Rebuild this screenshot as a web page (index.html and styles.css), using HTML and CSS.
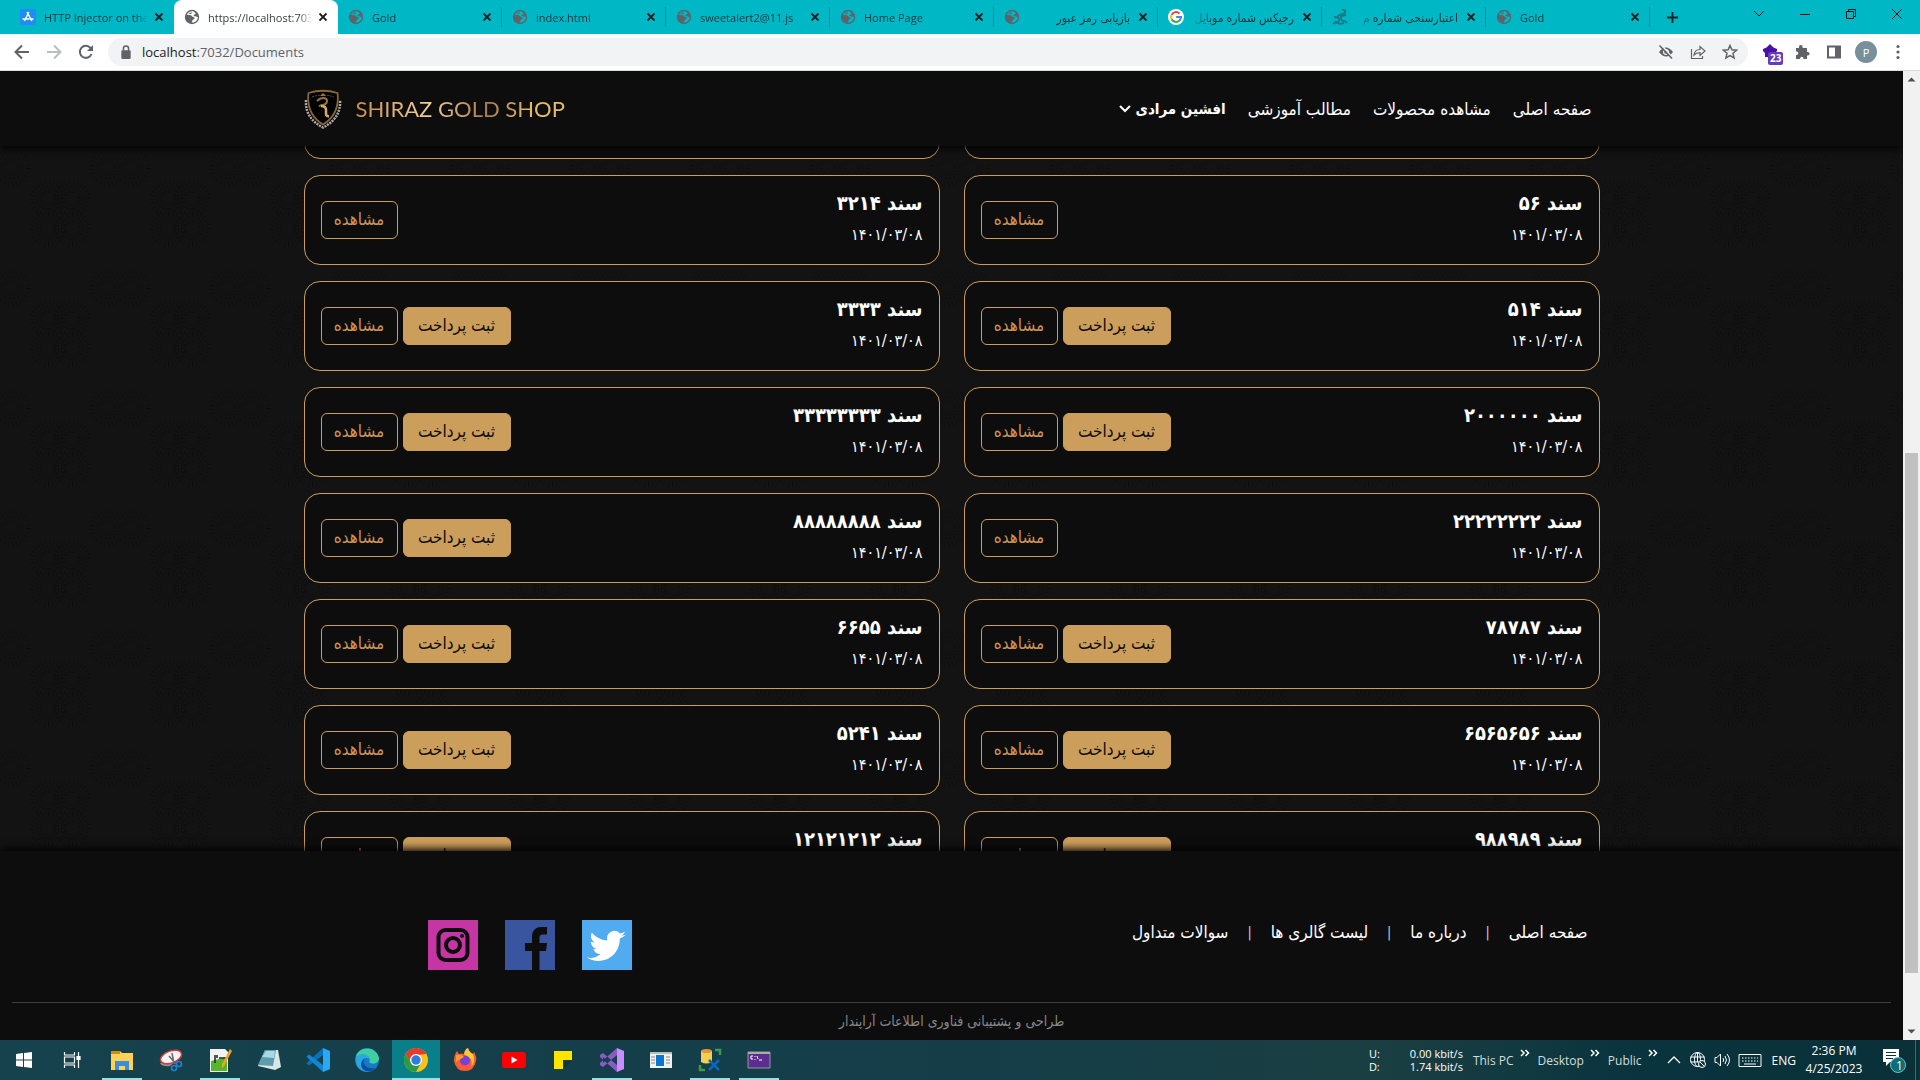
FILE: index.html
```html
<!DOCTYPE html>
<html lang="en">
<head>
<meta charset="utf-8">
<title>Documents</title>
<link rel="stylesheet" href="styles.css">
</head>
<body>
<svg class="defs" aria-hidden="true">
  <symbol id="globe" viewBox="0 0 16 16"><circle cx="8" cy="8" r="7.2" fill="#5f6368"/><path d="M9 2.200C6 2 3.500 3.500 2.700 6c1.500-.8 2.500.2 3.800.2 1.500 0 1.300 1.600 3 1.800 1.600.2 1.200 2-.3 2.400-1 .3-.7 2.200-1.700 3.200 3.500.2 6.300-2.400 6.400-5.700-1.200.3-2-.6-3.400-.6-1 0-1.500-1.800.4-1.900C12.500 5.300 11 3 9 2.200z" fill="var(--hole)"/><path d="M4.500 4.300c1.500-.8 2.500-.9 3.500-.6l-1.200 1.600z" fill="#5f6368"/></symbol>
  <symbol id="x" viewBox="0 0 10 10"><path d="M1.500 1.500l7 7M8.500 1.500l-7 7" stroke="#202124" stroke-width="1.800" fill="none"/></symbol>
  <symbol id="more" viewBox="0 0 10 8"><path d="M1 1l3 3-3 3M5.500 1l3 3-3 3" stroke="#fff" stroke-width="1.500" fill="none"/></symbol>
</svg>

<div class="tabs">
  <div class="tab"><svg class="fav" viewBox="0 0 16 16"><rect width="16" height="16" rx="1" fill="#1e8df5"/><path d="M8.800 3L4.500 12M7 3l4.800 9M2.500 10h7M11 10h2.500" stroke="#fff" stroke-width="1.500" fill="none"/></svg><span class="name">HTTP Injector on the</span><button class="close" aria-label="Close"><svg><use href="#x"/></svg></button></div>
  <div class="tab active"><svg class="fav"><use href="#globe"/></svg><span class="name">https://localhost:7032</span><button class="close" aria-label="Close"><svg><use href="#x"/></svg></button></div>
  <div class="tab"><svg class="fav"><use href="#globe"/></svg><span class="name">Gold</span><button class="close" aria-label="Close"><svg><use href="#x"/></svg></button></div>
  <div class="tab"><svg class="fav"><use href="#globe"/></svg><span class="name">index.html</span><button class="close" aria-label="Close"><svg><use href="#x"/></svg></button></div>
  <div class="tab"><svg class="fav"><use href="#globe"/></svg><span class="name">sweetalert2@11.js</span><button class="close" aria-label="Close"><svg><use href="#x"/></svg></button></div>
  <div class="tab"><svg class="fav"><use href="#globe"/></svg><span class="name">Home Page</span><button class="close" aria-label="Close"><svg><use href="#x"/></svg></button></div>
  <div class="tab"><svg class="fav"><use href="#globe"/></svg><span class="name" dir="rtl">بازیابی رمز عبور</span><button class="close" aria-label="Close"><svg><use href="#x"/></svg></button></div>
  <div class="tab"><svg class="fav" viewBox="0 0 16 16"><circle cx="8" cy="8" r="8" fill="#fff"/><g fill="none" stroke-width="2"><path d="M11.500 4.500A5 5 0 0 0 3.600 5.700" stroke="#ea4335"/><path d="M3.600 5.700a5 5 0 0 0 0 4.600" stroke="#fbbc05"/><path d="M3.600 10.300a5 5 0 0 0 7.600 1.500" stroke="#34a853"/><path d="M11.200 11.800A5 5 0 0 0 13 8H8.200" stroke="#4285f4"/></g></svg><span class="name" dir="rtl">رجیکس شماره موبایل</span><button class="close" aria-label="Close"><svg><use href="#x"/></svg></button></div>
  <div class="tab"><svg class="fav" viewBox="0 0 16 16"><path d="M10 1c4-1 4 3 1 4-2 1-5 0-5 3M14 6c-4 1-6 1-5 4 1 3 4 1 6 4M2 8c2 0 5 0 5 3s-4 2-6 4M3 12c2 3 6 3 9 2" stroke="#177c86" stroke-width="2" fill="none"/></svg><span class="name" dir="rtl">اعتبارسنجی شماره م</span><button class="close" aria-label="Close"><svg><use href="#x"/></svg></button></div>
  <div class="tab"><svg class="fav"><use href="#globe"/></svg><span class="name">Gold</span><button class="close" aria-label="Close"><svg><use href="#x"/></svg></button></div>
  <button class="newtab" aria-label="New tab"><svg viewBox="0 0 14 14"><path d="M7 1v12M1 7h12" stroke="#202124" stroke-width="2"/></svg></button>
  <div class="window-buttons">
    <button aria-label="Search tabs"><svg viewBox="0 0 12 12"><path d="M1 3l5 5 5-5" stroke="#111" fill="none"/></svg></button>
    <button aria-label="Minimize"><svg viewBox="0 0 12 12"><path d="M1 6.500h10" stroke="#111" fill="none"/></svg></button>
    <button aria-label="Restore"><svg viewBox="0 0 12 12"><path d="M1.500 3.500h7v7h-7zM3.500 3.500v-2h7v7h-2" stroke="#111" fill="none"/></svg></button>
    <button aria-label="Close window"><svg viewBox="0 0 12 12"><path d="M1 1l10 10M11 1L1 11" stroke="#111" fill="none"/></svg></button>
  </div>
</div>

<div class="toolbar">
  <button aria-label="Back"><svg viewBox="0 0 16 16"><path d="M15 8H2M8 1.500L1.500 8 8 14.500" stroke="#5f6368" stroke-width="2" fill="none"/></svg></button>
  <button aria-label="Forward"><svg viewBox="0 0 16 16"><path d="M1 8h13M8 1.500L14.500 8 8 14.500" stroke="#babcbe" stroke-width="2" fill="none"/></svg></button>
  <button aria-label="Reload"><svg viewBox="0 0 16 16"><path d="M13.500 10A6 6 0 1 1 12.500 4L14 5.500" stroke="#5f6368" stroke-width="2" fill="none"/><path d="M15 1v6H9z" fill="#5f6368"/></svg></button>
  <div class="omnibox">
    <svg class="lock" viewBox="0 0 10 12"><rect x="1" y="4.500" width="8" height="7.500" rx="1" fill="#5f6368"/><path d="M2.800 5V3a2.200 2.200 0 0 1 4.400 0v2" stroke="#5f6368" stroke-width="1.300" fill="none"/></svg>
    <a class="url" href="#"><b>localhost</b>:7032/Documents</a>
    <button aria-label="Cookies blocked"><svg viewBox="0 0 16 16"><path d="M1 8q7-9 14 0-7 9-14 0z" fill="#5f6368"/><circle cx="8" cy="8" r="3" fill="#f1f3f4"/><circle cx="8" cy="8" r="1.800" fill="#5f6368"/><path d="M3 .8L15 14" stroke="#f1f3f4" stroke-width="1.500"/><path d="M1.500 1.500l12.500 13" stroke="#5f6368" stroke-width="1.600"/></svg></button>
    <button aria-label="Share"><svg viewBox="0 0 16 16"><path d="M1.500 5v9.500h11V12M4 11c.5-4 2.500-5.500 6-5.500V2.500L15 7l-5 4.500V8.600C7 8.600 5.500 9.300 4 11z" stroke="#5f6368" stroke-width="1.200" fill="none"/></svg></button>
    <button aria-label="Bookmark"><svg viewBox="0 0 16 16"><path d="M8 1.500l1.900 4.300 4.700.4-3.600 3.100 1.100 4.600L8 11.500l-4.100 2.400L5 9.300 1.400 6.200l4.700-.4z" stroke="#5f6368" stroke-width="1.500" fill="none"/></svg></button>
  </div>
  <button class="ext" aria-label="Extension"><svg viewBox="0 0 16 16"><path d="M8 0l3.500 3.500L15 5v2l-2 2v4H3V9L1 7V5l3.500-1.500z" fill="#4a0fa8"/></svg><span class="badge">23</span></button>
  <button aria-label="Extensions"><svg viewBox="0 0 16 16"><path d="M5 4V2.800a1.800 1.800 0 0 1 3.600 0V4H13v4h.8a1.800 1.800 0 0 1 0 3.600H13V15H9.500v-.6a1.700 1.700 0 0 0-3.400 0v.6H2v-4h.6a1.700 1.700 0 0 0 0-3.400H2V4z" fill="#5f6368"/></svg></button>
  <button aria-label="Side panel"><svg viewBox="0 0 16 16"><rect x="2" y="2.500" width="12" height="11" fill="none" stroke="#5f6368" stroke-width="2"/><path d="M9 2h5v12H9z" fill="#5f6368"/></svg></button>
  <button class="avatar">P</button>
  <button aria-label="Menu"><svg viewBox="0 0 16 16" fill="#5f6368"><circle cx="8" cy="2.500" r="1.600"/><circle cx="8" cy="8" r="1.600"/><circle cx="8" cy="13.500" r="1.600"/></svg></button>
</div>

<div class="viewport">
  <div class="site" dir="rtl" lang="fa">
    <header class="site-header">
      <div class="container header-row">
        <nav class="main-nav">
          <a href="#">صفحه اصلی</a>
          <a href="#">مشاهده محصولات</a>
          <a href="#">مطالب آموزشی</a>
          <a href="#" class="user">افشین مرادی <svg viewBox="0 0 12 8"><path d="M1 1l5 5 5-5" stroke="#fff" stroke-width="2" fill="none"/></svg></a>
        </nav>
        <a class="brand" href="#" dir="ltr">
          <svg viewBox="0 0 38 40"><path d="M2 11C1 24 8 33 19 38.500 30 33 37 24 36 11" fill="none" stroke="#aaa" stroke-width="2.500" stroke-dasharray="2 1"/><path d="M4.500 4Q19-.5 33.500 4 36 25 19 35.500 2 25 4.500 4z" fill="#000" stroke="#8a6830" stroke-width="1.800"/><path d="M8 8q11-4 22 0" stroke="#555" stroke-width="1" stroke-dasharray="2 1" fill="none"/><path d="M13 12q3-3 6-3 4 0 4 3t-4 4q-3 0-4 1.500" fill="none" stroke="#9a7434" stroke-width="2"/><path d="M17 17q5 0 5 4v4q0 2 3 2.500" fill="none" stroke="#dba95c" stroke-width="2.500"/><path d="M16 7l3-3 3 3z" fill="#9a7434"/></svg>
          <span>SHIRAZ GOLD SHOP</span>
        </a>
      </div>
    </header>

    <main class="documents">
      <div class="container grid">
        <article class="card"></article>
        <article class="card"></article>
        <article class="card"><div><h2>سند ۵۶</h2><p>۱۴۰۱/۰۳/۰۸</p></div><div class="actions"><button class="btn">مشاهده</button></div></article>
        <article class="card"><div><h2>سند ۳۲۱۴</h2><p>۱۴۰۱/۰۳/۰۸</p></div><div class="actions"><button class="btn">مشاهده</button></div></article>
        <article class="card"><div><h2>سند ۵۱۴</h2><p>۱۴۰۱/۰۳/۰۸</p></div><div class="actions"><button class="btn pay">ثبت پرداخت</button><button class="btn">مشاهده</button></div></article>
        <article class="card"><div><h2>سند ۳۳۳۳</h2><p>۱۴۰۱/۰۳/۰۸</p></div><div class="actions"><button class="btn pay">ثبت پرداخت</button><button class="btn">مشاهده</button></div></article>
        <article class="card"><div><h2>سند ۲۰۰۰۰۰۰</h2><p>۱۴۰۱/۰۳/۰۸</p></div><div class="actions"><button class="btn pay">ثبت پرداخت</button><button class="btn">مشاهده</button></div></article>
        <article class="card"><div><h2>سند ۳۳۳۳۳۳۳۳</h2><p>۱۴۰۱/۰۳/۰۸</p></div><div class="actions"><button class="btn pay">ثبت پرداخت</button><button class="btn">مشاهده</button></div></article>
        <article class="card"><div><h2>سند ۲۲۲۲۲۲۲۲</h2><p>۱۴۰۱/۰۳/۰۸</p></div><div class="actions"><button class="btn">مشاهده</button></div></article>
        <article class="card"><div><h2>سند ۸۸۸۸۸۸۸۸</h2><p>۱۴۰۱/۰۳/۰۸</p></div><div class="actions"><button class="btn pay">ثبت پرداخت</button><button class="btn">مشاهده</button></div></article>
        <article class="card"><div><h2>سند ۷۸۷۸۷</h2><p>۱۴۰۱/۰۳/۰۸</p></div><div class="actions"><button class="btn pay">ثبت پرداخت</button><button class="btn">مشاهده</button></div></article>
        <article class="card"><div><h2>سند ۶۶۵۵</h2><p>۱۴۰۱/۰۳/۰۸</p></div><div class="actions"><button class="btn pay">ثبت پرداخت</button><button class="btn">مشاهده</button></div></article>
        <article class="card"><div><h2>سند ۶۵۶۵۶۵۶</h2><p>۱۴۰۱/۰۳/۰۸</p></div><div class="actions"><button class="btn pay">ثبت پرداخت</button><button class="btn">مشاهده</button></div></article>
        <article class="card"><div><h2>سند ۵۲۴۱</h2><p>۱۴۰۱/۰۳/۰۸</p></div><div class="actions"><button class="btn pay">ثبت پرداخت</button><button class="btn">مشاهده</button></div></article>
        <article class="card"><div><h2>سند ۹۸۸۹۸۹</h2><p>۱۴۰۱/۰۳/۰۸</p></div><div class="actions"><button class="btn pay">ثبت پرداخت</button><button class="btn">مشاهده</button></div></article>
        <article class="card"><div><h2>سند ۱۲۱۲۱۲۱۲</h2><p>۱۴۰۱/۰۳/۰۸</p></div><div class="actions"><button class="btn pay">ثبت پرداخت</button><button class="btn">مشاهده</button></div></article>
      </div>
    </main>

    <footer class="site-footer">
      <div class="container footer-row">
        <nav class="footer-nav">
          <a href="#">صفحه اصلی</a><span>|</span><a href="#">درباره ما</a><span>|</span><a href="#">لیست گالری ها</a><span>|</span><a href="#">سوالات متداول</a>
        </nav>
        <div class="social">
          <a href="#" aria-label="Twitter"><svg viewBox="0 0 50 50"><path fill="#50abf1" d="M0 0h50v50H0z"/><path fill="#fff" d="M44 14.500c-1.300.6-2.800 1-4.300 1.200 1.500-.9 2.700-2.400 3.300-4.100-1.500.9-3 1.500-4.800 1.800a7.500 7.500 0 0 0-12.800 6.900c-6.300-.3-11.800-3.300-15.500-7.900a7.500 7.500 0 0 0 2.300 10c-1.200 0-2.400-.4-3.400-1 0 3.700 2.600 6.700 6 7.400-1.100.3-2.300.4-3.400.1.900 3 3.700 5.200 7 5.200A15.100 15.100 0 0 1 4.800 37.500c3.300 2.100 7.300 3.400 11.500 3.400 14 0 22-11.800 21.400-22.400A15 15 0 0 0 44 14.500z"/></svg></a>
          <a href="#" aria-label="Facebook"><svg viewBox="0 0 50 50"><path fill="#3a559f" d="M0 0h50v50H0z"/><path fill="#0d0d0d" d="M27 50V31h-7v-8h7v-6c0-7 4-10 9.500-10H42v7.500h-4c-3 0-3.500 1.500-3.500 4V23H42l-1 8h-6.500v19z"/></svg></a>
          <a href="#" aria-label="Instagram"><svg viewBox="0 0 50 50"><path fill="#c536a4" d="M0 0h50v50H0z"/><g fill="none" stroke="#0d0d0d" stroke-width="4"><rect x="10.500" y="10" width="29" height="30" rx="7"/><circle cx="25" cy="25" r="7"/></g><circle cx="34" cy="16" r="2" fill="#0d0d0d"/></svg></a>
        </div>
      </div>
      <p class="credit">طراحی و پشتیبانی فناوری اطلاعات آراپندار</p>
    </footer>
  </div>
  <div class="scrollbar" aria-hidden="true">
    <svg viewBox="0 0 17 17"><path d="M4.500 10.500l4-4 4 4z" fill="#505050"/></svg>
    <div class="before"></div><div class="thumb"></div><div class="after"></div>
    <svg viewBox="0 0 17 17"><path d="M4.500 6.500l4 4 4-4z" fill="#505050"/></svg>
  </div>
</div>

<div class="taskbar">
  <div class="apps">
    <button aria-label="Start"><svg viewBox="0 0 24 24" fill="#fff"><path d="M4 6l7-1v6.500H4zM12 4.900L20 4v7.500h-8zM4 12.500h7V19l-7-1zM12 12.500h8V20l-8-.9z"/></svg></button>
    <button aria-label="Task view"><svg viewBox="0 0 24 24" fill="none" stroke="#fff" stroke-width="1.200"><path d="M3.500 4v3h10V4M3.500 20v-3h10v3M3.500 9h10v6h-10zM17.500 4v4M17.500 12v8"/><path d="M16 8.500h3v3h-3z" fill="#fff"/></svg></button>
    <button class="open" aria-label="Explorer"><svg viewBox="0 0 24 24"><path d="M1 3h9l2 2h11v17H1z" fill="#ffd257"/><path d="M1 3h9v3H1z" fill="#d48a0a"/><path d="M5 22v-9h14v9h-4v-4H9v4z" fill="#3b8edb"/></svg></button>
    <button aria-label="Snipping tool"><svg viewBox="0 0 24 24"><path d="M1 15q2 4 10 3l6-5" fill="#8a9295"/><ellipse cx="12" cy="9" rx="11" ry="6" fill="#f5f5f5" stroke="#d83a3a" stroke-width="1.500" transform="rotate(-20 12 9)"/><path d="M10 8l7 8M13 5l2 11" stroke="#667" stroke-width="1.500"/><g fill="none" stroke="#2080c8" stroke-width="1.700"><circle cx="20" cy="16" r="2.500"/><circle cx="15" cy="20" r="2.500"/></g></svg></button>
    <button class="open" aria-label="Notepad++"><svg viewBox="0 0 24 24"><path d="M2 1h15l3 3v20H2z" fill="#f2f2f2"/><path d="M3 13l16-4v14H3z" fill="#55b52b"/><path d="M7 7v8M9 7v3M11 10h7" stroke="#222" stroke-width="1.500"/><path d="M22 1l2 2-8 15-2 2v-4z" fill="#eea32a"/></svg></button>
    <button aria-label="Notepad"><svg viewBox="0 0 24 24"><path d="M8 2h13l3 17-6 3-17-4z" fill="#d8e6e6"/><path d="M8 2h11l-3 16-15-1z" fill="#5e9bac"/><path d="M9 3h9l-1 7-12-1z" fill="#a9d9e4"/></svg></button>
    <button aria-label="VS Code"><svg viewBox="0 0 24 24"><path d="M17 0l7 3v18l-7 3z" fill="#2aa7f5"/><path d="M17 0v7L3 17.500.500 15.200z" fill="#0a72bd"/><path d="M17 24v-7L3 6.500.500 8.800z" fill="#1287d8"/></svg></button>
    <button aria-label="Edge"><svg viewBox="0 0 24 24"><circle cx="12" cy="12" r="12" fill="#1878c9"/><path d="M1 9C3-2 21-3 24 10c0 6-7 7-10 4 3-5-4-9-13-5z" fill="#3ecfa0"/><path d="M1 9c5-5 13-3 13 2-5-3-8 2-5 7 3 4 9 4 12 2-6 7-22 4-20-11z" fill="#2aa9e0"/><path d="M10 10c-4 5 1 12 11 10-3 5-14 5-15-3 0-4 2-6 4-7z" fill="#0b4f9c"/></svg></button>
    <button class="open current" aria-label="Chrome"><svg viewBox="0 0 24 24"><circle cx="12" cy="12" r="12" fill="#fbc116"/><path d="M1.600 6a12 12 0 0 1 20.800 0L12 7l-5 8z" fill="#e33b2e"/><path d="M1.600 6A12 12 0 0 0 12 24l5-9-5 2-5-2z" fill="#2a9b46"/><circle cx="12" cy="12" r="6" fill="#fff"/><circle cx="12" cy="12" r="4.700" fill="#2a7de1"/></svg></button>
    <button aria-label="Firefox"><svg viewBox="0 0 24 24"><path d="M4 3l2 3q3-1 5 0 1-5 4-6 1 4 5 6l1-2q3 5 2 9-2 10-11 10T1 13q0-6 3-10z" fill="#ff5a36"/><path d="M15 0q1 4 5 6 3 8-2 13 2-5-1-9-5-2-6-4 1-5 4-6z" fill="#ffc933"/><circle cx="12" cy="12.500" r="5" fill="#7542d5"/><path d="M3 7q6-1 8 2l-5 3-3 2z" fill="#ff9b28"/></svg></button>
    <button aria-label="YouTube"><svg viewBox="0 0 24 24"><rect y="4" width="24" height="16" rx="3" fill="#f00"/><path d="M9.500 8.500v7l6-3.500z" fill="#fff"/></svg></button>
    <button aria-label="Sticky notes"><svg viewBox="0 0 24 24"><path d="M3 3h18v9h-9v9H3z" fill="#ffe600"/><path d="M13 21v-8h8z" fill="#123842"/></svg></button>
    <button class="open" aria-label="Visual Studio"><svg viewBox="0 0 24 24"><path d="M0 7l3-2 14 12v7L0 9zM0 17l3 2L17 7V0L0 15z" fill="#8b5bc4"/><path d="M3 9l3 3-3 3z" fill="#12404b"/><path d="M17 0l7 3v18l-7 3z" fill="#c88dfa"/><path d="M17 8l-5 4 5 4z" fill="#12404b"/></svg></button>
    <button aria-label="Application"><svg viewBox="0 0 24 24"><path d="M1 4h22v16H1z" fill="#f1f1f1"/><path d="M1 4h22v2H1z" fill="#bcbcbc"/><path d="M7 7h8v11H7z" fill="#0b76d1"/><path d="M2 9h4M2 12h4M2 15h4M17 9h4M17 12h4M17 15h4" stroke="#888"/></svg></button>
    <button class="open" aria-label="SQL Studio"><svg viewBox="0 0 24 24"><path d="M3 3v11q5 3 11 0V3z" fill="#f4cf50"/><ellipse cx="8.500" cy="3" rx="5.500" ry="2" fill="#e0983a"/><path d="M17 2h5v5M2 17v5h5" stroke="#3f9a46" stroke-width="2.500" fill="none"/><path d="M11 12l10 10M21 12L11 22" stroke="#0b68b8" stroke-width="2.500"/></svg></button>
    <button class="open" aria-label="Terminal"><svg viewBox="0 0 24 24"><path d="M1 4h22v16H1z" fill="#5c2d91" stroke="#999"/><path d="M1 4h22v2H1z" fill="#aaa"/><path d="M6 8H4v3h2M8 8v1M8 11v1M10 8l1 3M12 12h3" stroke="#fff" fill="none"/></svg></button>
  </div>
  <div class="tray">
    <div class="net"><span>U:</span><span>0.00 kbit/s</span><span>D:</span><span>1.74 kbit/s</span></div>
    <div class="shortcut">This PC<svg><use href="#more"/></svg></div>
    <div class="shortcut">Desktop<svg><use href="#more"/></svg></div>
    <div class="shortcut">Public<svg><use href="#more"/></svg></div>
    <div class="status">
      <svg viewBox="0 0 16 16"><path d="M2 11l6-6 6 6" stroke="#fff" stroke-width="1.300" fill="none"/></svg>
      <svg viewBox="0 0 16 16" fill="none" stroke="#fff"><circle cx="7.500" cy="7.500" r="7"/><ellipse cx="7.500" cy="7.500" rx="3" ry="7"/><path d="M.5 5h14M.5 10h9M7.500 0v10"/><circle cx="12" cy="12" r="3.500" fill="#0b343d"/><path d="M10 10l4 4"/></svg>
      <svg viewBox="0 0 16 16" fill="none" stroke="#fff"><path d="M1 5.500h2L6.500 2v12L3 10.500H1zM9 6q1.500 2 0 4M11 4q3 4 0 8M13 2q5 6 0 12"/></svg>
      <svg class="kbd" viewBox="0 0 24 16" fill="none" stroke="#fff"><path d="M1 2.500h22v12H1z"/><path d="M4 6h16M4 9h16" stroke-dasharray="1.500 1.500"/><path d="M6 12h12"/></svg>
    </div>
    <span class="lang">ENG</span>
    <div class="clock"><span>2:36 PM</span><span>4/25/2023</span></div>
    <button class="notify" aria-label="Notifications"><svg viewBox="0 0 24 26"><path d="M1 2h16v13H8l-4 4v-4H1z" fill="#fff"/><path d="M4 5.500h10M4 8.500h10M4 11.500h7" stroke="#0b343d"/><circle cx="16" cy="18" r="7.500" fill="#0a6f76" stroke="#7bb" /></svg><span>1</span></button>
  </div>
</div>
</body>
</html>
```
FILE: styles.css
```css
* { box-sizing: border-box; }
body {
  margin: 0;
  height: 100vh;
  display: flex;
  flex-direction: column;
  overflow: hidden;
  font-family: "Open Sans", "DejaVu Sans Condensed", sans-serif;
  font-size: 12px;
}
button { border: 0; padding: 0; background: none; font: inherit; color: inherit; }
a { color: inherit; text-decoration: none; }
svg { display: block; }
.defs { display: none; }

/* browser tabs */
.tabs { --hole: #00b7c6; display: flex; height: 34px; padding-left: 10px; background: #00b7c6; color: #16383c; }
.tab { display: flex; align-items: center; width: 164px; padding: 0 10px; position: relative; }
.tab:not(.active)::after { content: ""; position: absolute; right: 0; top: 7px; height: 20px; width: 1px; background: #1a7f88; }
.tab:first-child::after { display: none; }
.tab.active { --hole: #fff; background: #fff; border-radius: 8px 8px 0 0; color: #3c4043; }
.fav { width: 16px; height: 16px; flex: none; }
.name {
  flex: 1;
  margin: 0 6px 0 8px;
  overflow: hidden;
  white-space: nowrap;
  font-size: 11px;
  mask-image: linear-gradient(to right, #000 88%, transparent);
}
.name[dir="rtl"] { margin: 0 8px; font-size: 12px; mask-image: linear-gradient(to left, #000 80%, transparent); }
.close svg { width: 10px; height: 10px; }
.newtab { width: 45px; display: grid; place-items: center; }
.newtab svg { width: 13px; height: 13px; }
.window-buttons { display: flex; margin-left: auto; height: 28px; }
.window-buttons button { width: 46px; display: grid; place-items: center; }
.window-buttons svg { width: 12px; height: 12px; }

/* browser toolbar */
.toolbar { display: flex; align-items: center; height: 37px; padding: 0 6px; background: #fff; border-bottom: 1px solid #dadce0; }
.toolbar button { width: 32px; height: 28px; display: grid; place-items: center; }
.toolbar svg { width: 16px; height: 16px; }
.omnibox { flex: 1; display: flex; align-items: center; height: 28px; margin: 0 6px; padding: 0 2px 0 12px; border-radius: 14px; background: #f1f3f4; }
.omnibox .lock { width: 12px; height: 14px; }
.url { flex: 1; margin-left: 10px; font-size: 13px; color: #5f6368; }
.url b { font-weight: 400; color: #202124; }
.ext { position: relative; }
.badge { position: absolute; left: 14px; top: 14px; padding: 0 2px; border-radius: 2px; background: #673ab7; color: #fff; font-size: 10px; font-weight: 700; line-height: 13px; }
.toolbar .avatar { width: 22px; height: 22px; margin: 0 5px; border-radius: 50%; background: #78909c; color: #fff; font-size: 11px; }

/* web page */
.viewport { flex: 1; min-height: 0; display: flex; }
.site {
  flex: 1;
  min-width: 0;
  display: flex;
  flex-direction: column;
  overflow: hidden;
  font-family: "DejaVu Sans Condensed", "DejaVu Sans", sans-serif;
  font-size: 16px;
  color: #fff;
  background: #121212;
}
.container { width: 100%; max-width: 1320px; margin: 0 auto; padding: 0 12px; }
.site-header { z-index: 1; background: #0d0d0d; box-shadow: 0 2px 8px #000; }
.header-row { display: flex; align-items: center; justify-content: space-between; height: 75px; }
.main-nav { display: flex; gap: 22px; padding-right: 8px; font-size: 17px; }
.user { display: flex; align-items: center; gap: 5px; font-weight: 700; font-size: 15px; }
.user svg { width: 12px; height: 8px; }
.brand { display: flex; align-items: center; gap: 14px; }
.brand svg { width: 38px; height: 40px; }
.brand span {
  font: 400 22px/32px Lato, sans-serif;
  background: linear-gradient(90deg, #c98d4c, #f3cf9c 35%, #a97a4c 62%, #e8bd63 85%, #e3bd6c);
  background-clip: text;
  color: transparent;
}
.documents {
  flex: 1;
  min-height: 0;
  overflow: hidden;
  background: #131313 url("data:image/svg+xml,%3Csvg xmlns='http://www.w3.org/2000/svg' width='120' height='120' fill='none' stroke='%230e0e0e'%3E%3Cdefs%3E%3Cg id='a'%3E%3Ccircle r='7' stroke-width='4' stroke-dasharray='1 2'/%3E%3Ccircle r='11' stroke-width='1'/%3E%3Ccircle r='16' stroke-width='6' stroke-dasharray='1 3'/%3E%3C/g%3E%3C/defs%3E%3Cuse href='%23a' x='12' y='22'/%3E%3Cuse href='%23a' x='108' y='22'/%3E%3Cuse href='%23a' x='48' y='82'/%3E%3Cuse href='%23a' x='72' y='82'/%3E%3Cuse href='%23a' x='48' y='52'/%3E%3Cuse href='%23a' x='72' y='52'/%3E%3C/svg%3E");
}
/* the list is shown scrolled down past its first row */
.grid { display: grid; grid-template-columns: 1fr 1fr; gap: 16px 24px; margin-top: -77px; }
.card {
  display: flex;
  align-items: center;
  justify-content: space-between;
  min-height: 90px;
  padding: 15px 16px 17px;
  border: 1px solid #cc9e5c;
  border-radius: 16px;
  background: #0d0d0d;
}
.card h2 { margin: 0 0 8px; font-size: 20px; line-height: 24px; }
.card p { margin: 0; font-size: 16px; line-height: 24px; }
.actions { display: flex; gap: 5px; padding-top: 2px; }
.btn { min-width: 77px; height: 38px; padding: 0 8px 2px; border: 1px solid #cc9e5c; border-radius: 6px; font-size: 17px; color: #cc9353; }
.pay { min-width: 108px; background: #cc9e5c; color: #0d0d0d; }

.site-footer { z-index: 1; padding: 0 12px; background: #0d0d0d; box-shadow: 0 -2px 8px #000; }
.footer-row { display: flex; justify-content: space-between; padding: 69px 24px 32px 136px; }
.footer-nav { display: flex; gap: 19px; font-size: 17px; line-height: 24px; }
.footer-nav span { font-size: 14px; color: #ccc; }
.social { display: flex; gap: 27px; }
.social svg { width: 50px; height: 50px; }
.credit { margin: 0; padding: 6px 0 7px; border-top: 1px solid #3d3d3d; text-align: center; font-size: 14px; line-height: 24px; color: #888; }

.scrollbar { width: 17px; display: flex; flex-direction: column; background: #f1f1f1; }
.scrollbar svg { width: 17px; height: 17px; }
.before { flex: 365; }
.thumb { flex: 520; margin: 0 2px; background: #c1c1c1; }
.after { flex: 50; }

/* desktop taskbar */
.taskbar { display: flex; justify-content: space-between; height: 40px; background: linear-gradient(90deg, #15424c, #143d48 50%, #1a3f42 72%, #09343e 85%, #0a3038); color: #fff; }
.apps { display: flex; gap: 1px; }
.apps button { width: 48px; display: grid; place-items: center; position: relative; }
.apps svg { width: 24px; height: 24px; }
.open::after { content: ""; position: absolute; left: 4px; right: 4px; bottom: 0; height: 2px; background: #8fe3ea; }
.apps .current { background: #087f89; }
.current::after { left: 0; right: 0; }
.tray { display: flex; align-items: center; padding-right: 4px; }
.net { display: grid; grid-template-columns: 24px 70px; line-height: 13px; margin-right: 10px; font-size: 11px; }
.net span:nth-child(even) { text-align: right; white-space: nowrap; }
.shortcut { display: flex; gap: 6px; margin-right: 8px; color: #d5dcdd; }
.shortcut svg { width: 10px; height: 8px; margin-top: -3px; }
.status { display: flex; align-items: center; gap: 8px; }
.status svg { width: 16px; height: 16px; }
.status .kbd { width: 24px; }
.lang { margin-left: 10px; }
.clock { width: 76px; display: grid; line-height: 18px; text-align: center; }
.notify { position: relative; width: 44px; display: grid; place-items: center; border-right: 1px solid #47666c; height: 40px; }
.notify svg { width: 24px; height: 26px; }
.notify span { position: absolute; left: 24px; top: 17px; }
```
